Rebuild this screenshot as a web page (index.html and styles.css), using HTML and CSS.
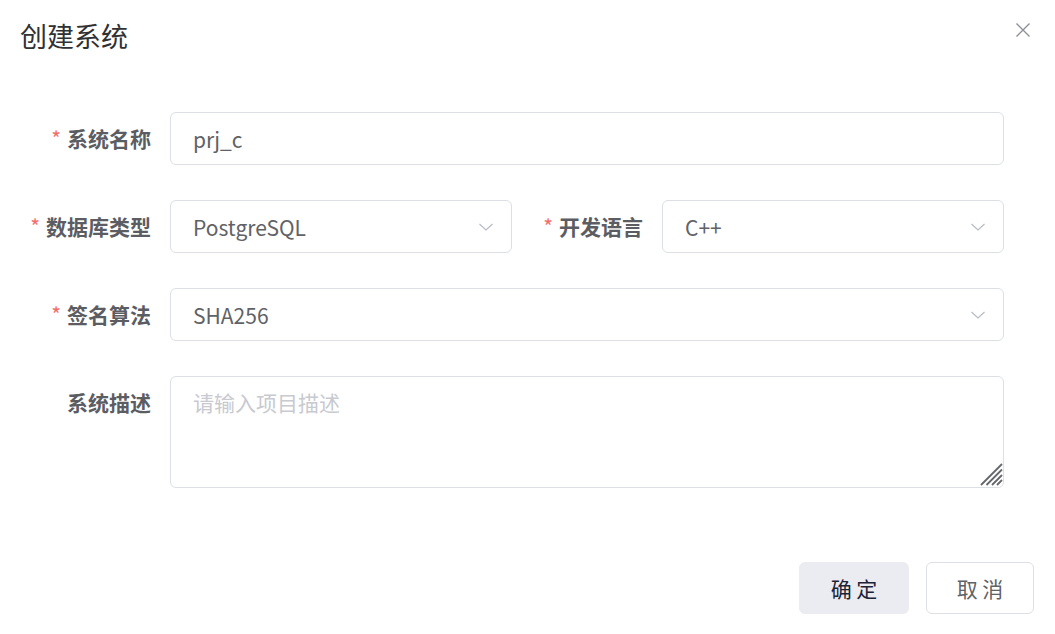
FILE: index.html
```html
<!DOCTYPE html>
<html lang="zh-CN">
<head>
    <meta charset="UTF-8">
    <meta name="viewport" content="width=device-width, initial-scale=1.0">
    <title>创建系统</title>
    <link rel="stylesheet" href="styles.css">
</head>
<body>
    <div class="dialog">
        <div class="dialog-header">
            <span class="dialog-title">创建系统</span>
            <button class="dialog-close" aria-label="关闭">
                <svg width="16" height="16" viewBox="0 0 16 16">
                    <path d="M1.5 1.5 L14.5 14.5 M14.5 1.5 L1.5 14.5" stroke="#8d9099" stroke-width="1.4" fill="none"/>
                </svg>
            </button>
        </div>

        <form class="form">
            <div class="form-row">
                <div class="form-item">
                    <label class="form-label required">系统名称</label>
                    <div class="field">
                        <input class="input" type="text" value="prj_c">
                    </div>
                </div>
            </div>

            <div class="form-row two">
                <div class="form-item">
                    <label class="form-label required">数据库类型</label>
                    <div class="field select">
                        <span class="select-value">PostgreSQL</span>
                        <svg class="arrow" width="16" height="10" viewBox="0 0 16 10"><path d="M1.5 2 L8 8 L14.5 2" stroke="#b9bcc4" stroke-width="1.2" fill="none"/></svg>
                    </div>
                </div>
                <div class="form-item">
                    <label class="form-label required">开发语言</label>
                    <div class="field select">
                        <span class="select-value">C++</span>
                        <svg class="arrow" width="16" height="10" viewBox="0 0 16 10"><path d="M1.5 2 L8 8 L14.5 2" stroke="#b9bcc4" stroke-width="1.2" fill="none"/></svg>
                    </div>
                </div>
            </div>

            <div class="form-row">
                <div class="form-item">
                    <label class="form-label required">签名算法</label>
                    <div class="field select">
                        <span class="select-value">SHA256</span>
                        <svg class="arrow" width="16" height="10" viewBox="0 0 16 10"><path d="M1.5 2 L8 8 L14.5 2" stroke="#b9bcc4" stroke-width="1.2" fill="none"/></svg>
                    </div>
                </div>
            </div>

            <div class="form-row">
                <div class="form-item">
                    <label class="form-label">系统描述</label>
                    <div class="field plain">
                        <textarea class="textarea" placeholder="请输入项目描述"></textarea>
                        <!-- resize grip drawn over the textarea corner -->
                        <svg class="grip" width="23" height="23" viewBox="0 0 23 23">
                            <path d="M1 22 L22 1 M6.5 22 L22 6.5 M12 22 L22 12 M17 22 L22 17" stroke="#66686d" stroke-width="1.8" fill="none"/>
                        </svg>
                    </div>
                </div>
            </div>
        </form>

        <div class="dialog-footer">
            <button class="btn btn-primary">确 定</button>
            <button class="btn btn-default">取 消</button>
        </div>
    </div>
</body>
</html>
```

FILE: styles.css
```css
* {
    box-sizing: border-box;
}
body {
    margin: 0;
    background: #ffffff;
    font-family: "Noto Sans CJK SC", "Noto Sans", sans-serif;
    color: #606266;
}
.dialog {
    width: 1055px;
    height: 634px;
    display: flex;
    flex-direction: column;
}
.dialog-header {
    display: flex;
    justify-content: space-between;
    align-items: center;
    padding: 14px 24px 0 20px;
    height: 70px;
}
.dialog-title {
    font-size: 27px;
    color: #303133;
    line-height: 40px;
    margin-top: -12px;
}
.dialog-close {
    background: none;
    border: none;
    padding: 0;
    margin-top: -24px;
    cursor: pointer;
    display: flex;
}
.form {
    padding: 42px 51px 0 20px;
    display: flex;
    flex-direction: column;
    gap: 35px;
}
.form-row {
    display: flex;
}
.form-row.two .form-item {
    flex: 1;
}
.form-item {
    display: flex;
    flex: 1;
}
.form-label {
    width: 150px;
    flex-shrink: 0;
    text-align: right;
    padding-right: 19px;
    font-size: 21px;
    font-weight: bold;
    line-height: 53px;
    color: #5b5d63;
    white-space: nowrap;
}
.form-label.required::before {
    content: "*";
    color: #f56c6c;
    margin-right: 6px;
    font-weight: normal;
}
.field {
    flex: 1;
    height: 53px;
    border: 1px solid #dcdfe6;
    border-radius: 6px;
    display: flex;
    align-items: center;
    padding: 0 22px;
}
.field.plain {
    position: relative;
    height: auto;
    padding: 0;
    border: none;
}
.select {
    justify-content: space-between;
    padding-right: 17px;
}
.select-value {
    font-size: 21px;
    color: #606266;
}
.input {
    width: 100%;
    border: none;
    outline: none;
    font-family: inherit;
    font-size: 21px;
    color: #606266;
    padding: 0;
    background: transparent;
}
.textarea {
    width: 100%;
    height: 112px;
    border: 1px solid #dcdfe6;
    border-radius: 6px;
    padding: 10px 22px;
    font-family: inherit;
    font-size: 21px;
    color: #606266;
    resize: none;
    outline: none;
    display: block;
}
.textarea::placeholder {
    color: #c8cad0;
}
.grip {
    position: absolute;
    right: 1px;
    bottom: 2px;
}
.dialog-footer {
    margin-top: auto;
    display: flex;
    justify-content: flex-end;
    gap: 17px;
    padding: 0 21px 20px 0;
}
.btn {
    height: 52px;
    width: 110px;
    font-family: inherit;
    font-size: 21px;
    border-radius: 6px;
    cursor: pointer;
}
.btn-primary {
    background: #ebecf1;
    border: 1px solid #ebecf1;
    color: #1b2336;
}
.btn-default {
    width: 108px;
    background: #ffffff;
    border: 1px solid #dcdfe6;
    color: #606266;
}
```
